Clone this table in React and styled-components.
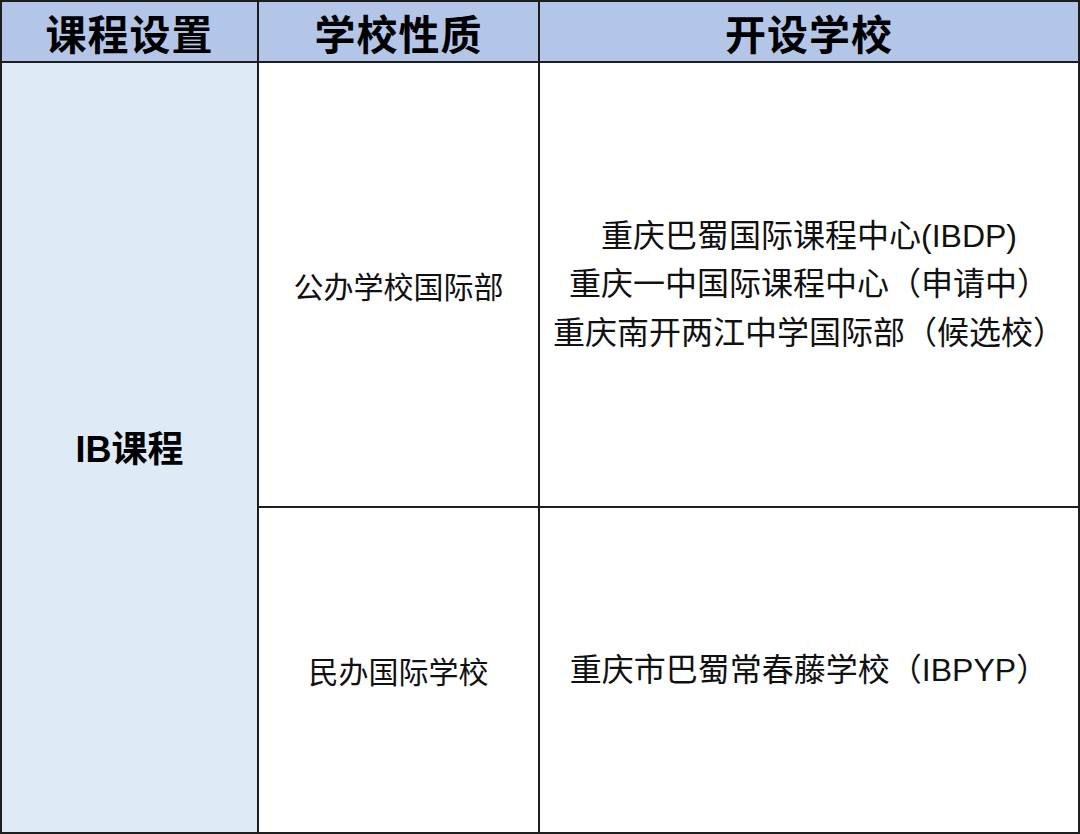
import styled, { createGlobalStyle } from 'styled-components';

const Global = createGlobalStyle`
    html, body {
        margin: 0;
        padding: 0;
        background: #ffffff;
    }
    body {
        font-family: "Liberation Sans", "Noto Sans CJK SC", sans-serif;
    }
`

const rows = [
    {
        type: "公办学校国际部",
        schools: [
            "重庆巴蜀国际课程中心(IBDP)",
            "重庆一中国际课程中心（申请中）",
            "重庆南开两江中学国际部（候选校）",
        ],
    },
    {
        type: "民办国际学校",
        schools: ["重庆市巴蜀常春藤学校（IBPYP）"],
    },
]

export default function App() {
    return (
        <>
            <Global />
            <Table>
                <Head>课程设置</Head>
                <Head>学校性质</Head>
                <Head>开设学校</Head>
                <Course span={rows.length}>IB课程</Course>
                {rows.map((row) => [
                    <Cell key={row.type + "-t"}>{row.type}</Cell>,
                    <Cell key={row.type + "-s"} wide>
                        {row.schools.map((s) => (
                            <Line key={s}>{s}</Line>
                        ))}
                    </Cell>,
                ])}
            </Table>
        </>
    )
}

const Table = styled.div`
    width: 1080px;
    height: 834px;
    box-sizing: border-box;
    padding: 2px;
    background: #1e1e1e;
    display: grid;
    grid-template-columns: 255px 279px 1fr;
    grid-template-rows: 59px 443px 1fr;
    gap: 2px;
`

const Head = styled.div`
    background: #b4c6e7;
    display: flex;
    align-items: center;
    justify-content: center;
    font-size: 41px;
    font-weight: bold;
    color: #000;
    letter-spacing: 1px;
`

const Course = styled.div`
    grid-row: span ${props => props.span};
    background: #deebf7;
    display: flex;
    align-items: center;
    justify-content: center;
    font-size: 36px;
    font-weight: bold;
    color: #000;
    padding-bottom: 4px;
`

const Cell = styled.div`
    background: #ffffff;
    display: flex;
    flex-direction: column;
    align-items: center;
    justify-content: center;
    font-size: ${props => props.wide ? "32px" : "30px"};
    color: #111;
`

const Line = styled.div`
    line-height: 48.5px;
    white-space: nowrap;
`
